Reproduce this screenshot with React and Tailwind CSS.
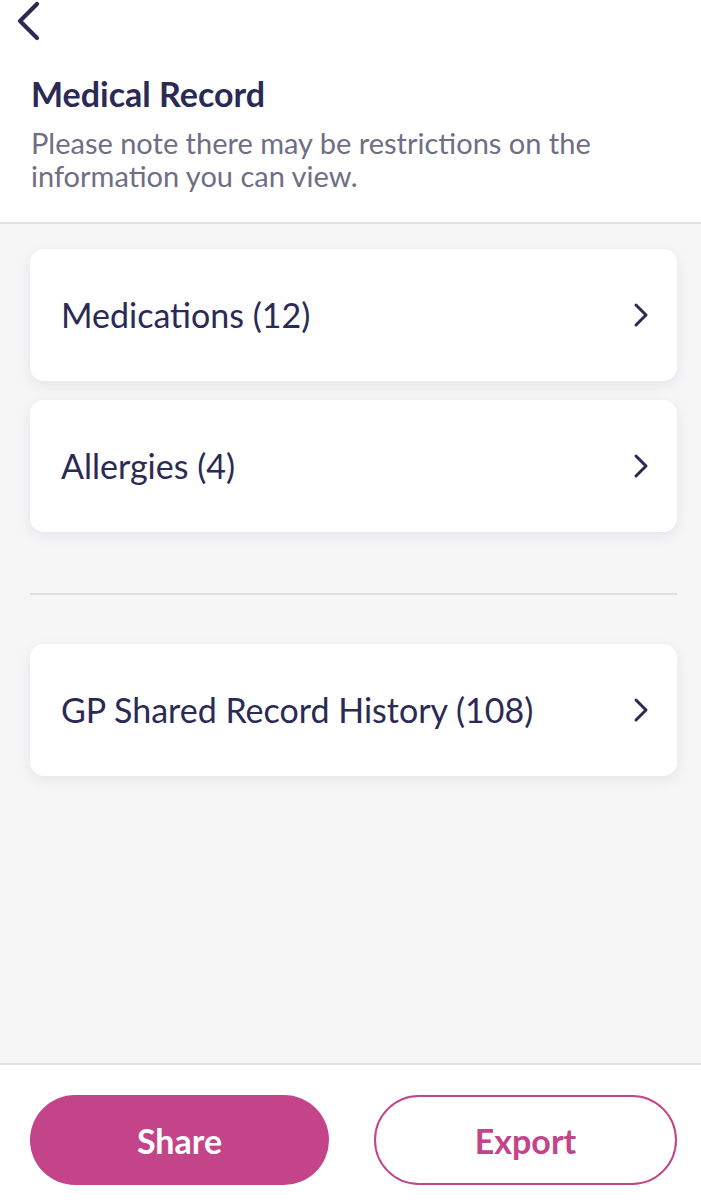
import React from "react";

function Chevron() {
  return (
    <svg width="16" height="26" viewBox="0 0 16 26" fill="none">
      <path d="M3 3 L13 13 L3 23" stroke="#2b2a55" strokeWidth="3" strokeLinecap="round" strokeLinejoin="round" />
    </svg>
  );
}

function Card({ label }) {
  return (
    <div className="flex h-[132px] items-center justify-between rounded-[14px] bg-white pl-[31px] pr-[28px] shadow-[0_4px_14px_rgba(40,40,80,0.08)]">
      <span className="text-[34px] leading-none text-[#2b2a55]">{label}</span>
      <Chevron />
    </div>
  );
}

export default function App() {
  return (
    <div className="flex h-[1200px] w-full flex-col overflow-hidden bg-white font-['Lato','Liberation_Sans',sans-serif]">
      <div className="border-b-2 border-[#e2e2e6] bg-white pb-[30px] pl-[31px] pr-[24px]">
        <div className="-ml-[17px] flex h-[44px] items-center">
          <svg width="30" height="42" viewBox="0 0 30 42" fill="none">
            <path d="M23 3 L6 20 L23 37" stroke="#2b2a55" strokeWidth="4.2" strokeLinecap="round" strokeLinejoin="round" />
          </svg>
        </div>
        <h1 className="mt-[30px] text-[34px] font-bold leading-[40px] text-[#2b2a55]">Medical Record</h1>
        <p className="mt-[12px] text-[29px] leading-[33px] text-[#6f6e84]">
          Please note there may be restrictions on the information you can view.
        </p>
      </div>
      <div className="flex flex-1 flex-col bg-[#f6f6f7] pl-[30px] pr-[24px] pt-[25px]">
        <div className="flex flex-col gap-[19px]">
          <Card label="Medications (12)" />
          <Card label="Allergies (4)" />
        </div>
        <div className="mt-[61px] h-[2px] bg-[#dedde8]" />
        <div className="mt-[49px]">
          <Card label="GP Shared Record History (108)" />
        </div>
      </div>
      <div className="flex h-[137px] gap-[45px] border-t-2 border-[#e2e2e6] bg-white pl-[30px] pr-[24px] pt-[30px]">
        <button className="flex h-[90px] flex-1 items-center justify-center rounded-full bg-[#c4448a] text-[34px] font-bold text-white">
          Share
        </button>
        <button className="flex h-[90px] flex-1 items-center justify-center rounded-full border-2 border-[#c4448a] bg-white text-[34px] font-bold text-[#c4448a]">
          Export
        </button>
      </div>
    </div>
  );
}
